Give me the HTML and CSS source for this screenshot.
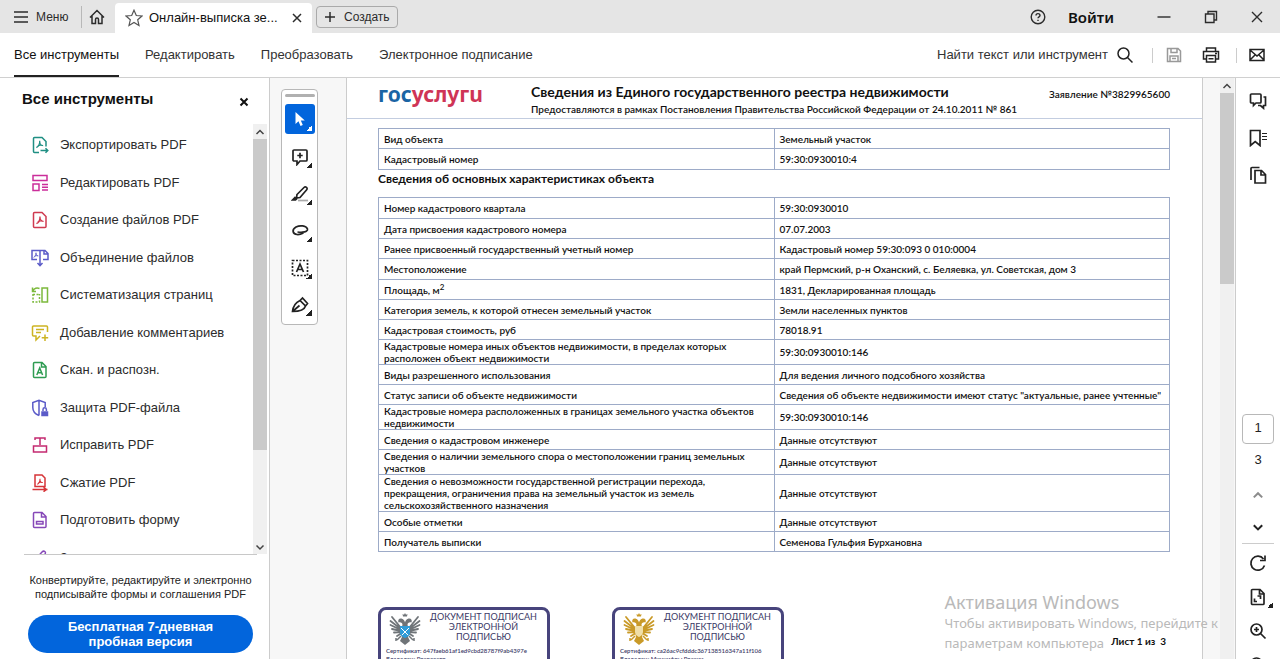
FILE: index.html
```html
<!DOCTYPE html>
<html lang="ru">
<head>
<meta charset="utf-8">
<title>Онлайн-выписка</title>
<link rel="stylesheet" href="styles.css">
</head>
<body>
<svg class="defs" aria-hidden="true">
  <symbol id="chev-up" viewBox="0 0 10 10"><path d="M1.5 7 5 3.5 8.5 7"/></symbol>
  <symbol id="chev-down" viewBox="0 0 10 10"><path d="M1.5 3.5 5 7l3.5-3.5"/></symbol>
  <symbol id="acro" viewBox="0 0 10 10"><path d="M1 9C3.500 8 5 5 5 1M5 2c0 2.500 2 4.500 4 4.500M2.500 7C4 6 6 5.800 8 6.300" /></symbol>
  <symbol id="eagle" viewBox="0 0 32 34">
    <path class="plume" d="M12 16 3 5M12 17 1.500 9M12 18 1.500 13M12 19 3 17M12 20 5 20.500M13 21 8 24M20 16l9-11M20 17l10.500-8M20 18l10.500-5M20 19l9-2M20 20l7 .5M19 21l5 3"/>
    <path class="body" d="M13.500 13c0-2-1.500-3-4-2.500C8.500 8 10 6 12.500 6.500 15 7 15.500 9 16 10.500c.5-1.500 1-3.500 3.500-4 2.500-.5 4 1.500 3 4-2.500-.5-4 .5-4 2.500l2 5-1.500 7 2 4-5 4-5-4 2-4-1.500-7z"/>
    <path class="body" d="M14 4.500 13.500 2l1.500.8L16 1l1 1.800 1.500-.8-.5 2.500z"/>
    <path class="legs" d="M12 24l-4 4M20 24l4 4M7 26v3M25 26v3"/>
  </symbol>
</svg>

<header class="titlebar">
  <button class="menu-btn"><svg class="ico16" viewBox="0 0 16 16"><path d="M1 3h14M1 8h14M1 13h14"/></svg>Меню</button>
  <button class="home-btn" aria-label="Главная"><svg class="ico16" viewBox="0 0 16 16"><path d="M1 8.500 8 1.500l7 7M3 7v7.500h3.500V10.500a1.500 1.500 0 0 1 3 0V14.500H13V7"/></svg></button>
  <div class="tab">
    <svg class="ico18 star" viewBox="0 0 18 18"><path d="m9 1.200 2.300 5.300 5.700.5-4.300 3.800 1.300 5.700L9 13.500l-5 3 1.300-5.700L1 7l5.700-.5z"/></svg>
    <span class="tab-name">Онлайн-выписка зе...</span>
    <button class="tab-close" aria-label="Закрыть вкладку"><svg class="ico12" viewBox="0 0 12 12"><path d="m2 2 8 8M10 2l-8 8"/></svg></button>
  </div>
  <button class="create-btn"><svg class="ico12" viewBox="0 0 12 12"><path d="M6 1v10M1 6h10"/></svg>Создать</button>
  <div class="window-side">
    <button aria-label="Справка"><svg class="ico16" viewBox="0 0 16 16"><circle cx="8" cy="8" r="6.800"/><path d="M6 6.500c0-2.500 4-2.500 4 0C10 8 8 7.700 8 9.300M8 10.700v1.300"/></svg></button>
    <button class="login">Войти</button>
    <button aria-label="Свернуть"><svg class="ico16" viewBox="0 0 16 16"><path d="M1.500 8h13"/></svg></button>
    <button aria-label="Восстановить"><svg class="ico14" viewBox="0 0 14 14"><path d="M1.500 4h8.500v8.500H1.500zM4 4V1.500h8.500V10H10"/></svg></button>
    <button aria-label="Закрыть"><svg class="ico14" viewBox="0 0 14 14"><path d="m2 2 10 10M12 2 2 12"/></svg></button>
  </div>
</header>

<nav class="toolbar">
  <a class="active" href="#all">Все инструменты</a>
  <a href="#edit">Редактировать</a>
  <a href="#convert">Преобразовать</a>
  <a href="#sign">Электронное подписание</a>
  <button class="search">Найти текст или инструмент<svg class="ico18" viewBox="0 0 18 18"><circle cx="7.500" cy="7.500" r="5.500"/><path d="m11.500 11.500 5 5"/></svg></button>
  <div class="quick">
    <button class="faded" aria-label="Сохранить"><svg class="ico16" viewBox="0 0 16 16"><path d="M1.500 1.500h10.500l2.500 2.500v10.500h-13zM5 1.500v4h6v-4M4 14.500V9h8v5.500M6 11.500h4"/></svg></button>
    <button aria-label="Печать"><svg class="ico18" viewBox="0 0 18 18"><path d="M4.500 5.500V2h9v3.500M4.500 13H1.500V5.500h15V13h-3M4.500 9.500h9V16h-9zM6.500 12.800h5M13 7.500h2"/></svg></button>
  </div>
  <button class="mail" aria-label="Отправить"><svg class="ico16" viewBox="0 0 16 16"><path d="M1 2.500h14v11H1zM1 3l7 6 7-6M1 13l5-5M15 13l-5-5"/></svg></button>
</nav>

<main class="workspace">
  <aside class="sidebar">
    <div class="side-head"><h2>Все инструменты</h2><button aria-label="Закрыть панель"><svg class="ico10" viewBox="0 0 10 10"><path d="m1.500 1.500 7 7M8.500 1.500l-7 7"/></svg></button></div>
    <div class="side-scroll">
      <ul class="tools">
        <li><a href="#t1"><svg class="ico18 c-teal" viewBox="0 0 18 18"><path d="M8 16.500H3.500a1 1 0 0 1-1-1v-13a1 1 0 0 1 1-1H11l4 4v5M9.500 14.500h7M14.500 12.200l2.300 2.300-2.300 2.300"/><use href="#acro" x="4.500" y="4" width="8.500" height="8.500"/></svg>Экспортировать PDF</a></li>
        <li><a href="#t2"><svg class="ico18 c-pink" viewBox="0 0 18 18"><path d="M2 1.500h14v5H2zM2 10h6v6.500H2zM11 10.500h6M11 13.300h6M11 16h6"/></svg>Редактировать PDF</a></li>
        <li><a href="#t3"><svg class="ico18 c-red" viewBox="0 0 18 18"><path d="M3.500 1.500H11l4 4v10a1 1 0 0 1-1 1H3.500a1 1 0 0 1-1-1v-13a1 1 0 0 1 1-1z"/><use href="#acro" x="4.500" y="4.500" width="9" height="9"/></svg>Создание файлов PDF</a></li>
        <li><a href="#t4"><svg class="ico18 c-indigo" viewBox="0 0 18 18"><path d="M6 10.500H1V1.500h8v9M12 10.500h5V4.500l-3-3H9M13 1.500V5h4M9 9v7.500M6.500 14 9 16.700 11.500 14"/><use href="#acro" x="2" y="3" width="6" height="6"/></svg>Объединение файлов</a></li>
        <li><a href="#t5"><svg class="ico18 c-lime" viewBox="0 0 18 18"><path d="M11 2h5.500v14H11z"/><path d="M2 5c1-3 4-3.500 6.500-2.500M1.500 1.500V5.500H5"/><path stroke-dasharray="2 1.500" d="M2 8.500h6.500M2 8v8h6.500V8"/></svg>Систематизация страниц</a></li>
        <li><a href="#t6"><svg class="ico18 c-gold" viewBox="0 0 18 18"><path d="M16.500 8V3a1 1 0 0 0-1-1h-13a1 1 0 0 0-1 1v8a1 1 0 0 0 1 1H5v4l4-4M5 5.500h8M5 8.500h5M14 10.500v6.500M10.700 13.700h6.500"/></svg>Добавление комментариев</a></li>
        <li><a href="#t7"><svg class="ico18 c-green" viewBox="0 0 18 18"><path d="M3.500 1.500H11l4 4v10a1 1 0 0 1-1 1H3.500a1 1 0 0 1-1-1v-13a1 1 0 0 1 1-1zM10.500 1.500V6H15M5.800 14 8.700 7l2.900 7M6.800 11.800h3.800"/></svg>Скан. и распозн.</a></li>
        <li><a href="#t8"><svg class="ico18 c-indigo" viewBox="0 0 18 18"><path d="M8 16.500C4 15 1.800 12 1.800 8.500V3.500L8 1.200l6.200 2.300V8M8 1.500v15"/><path class="solid" d="M11 13h5.500v3.500H11z"/><path d="M12 12v-1.500a1.700 1.700 0 0 1 3.400 0V12"/></svg>Защита PDF-файла</a></li>
        <li><a href="#t9"><svg class="ico18 c-crimson" viewBox="0 0 18 18"><path d="M4 4V2h10v2M9 2v7M2.500 10h13v6h-13z"/></svg>Исправить PDF</a></li>
        <li><a href="#t10"><svg class="ico18 c-red2" viewBox="0 0 18 18"><path d="M5 1h6l3 3v8.500H4V1zM1.500 15.500h15M12.500 13.300l3 2.200-3 2.200"/><use href="#acro" x="5.500" y="4" width="7" height="7"/></svg>Сжатие PDF</a></li>
        <li><a href="#t11"><svg class="ico18 c-purple" viewBox="0 0 18 18"><path d="M3.500 1.500H11l4 4v10a1 1 0 0 1-1 1H3.500a1 1 0 0 1-1-1v-13a1 1 0 0 1 1-1zM10.500 1.500V6H15M5.500 10.500h6.500V13H5.500z"/></svg>Подготовить форму</a></li>
        <li><a href="#t12"><svg class="ico18 c-purple" viewBox="0 0 18 18"><path d="M3 12 11 3c2-2 4.500 0 3 2L7 13l-4 2z"/></svg>Заполнить и подписать</a></li>
      </ul>
      <div class="scrollbar side-bar"><button aria-label="Вверх"><svg class="ico10"><use href="#chev-up"/></svg></button><span class="thumb"></span><button aria-label="Вниз"><svg class="ico10"><use href="#chev-down"/></svg></button></div>
    </div>
    <div class="promo">
      <p>Конвертируйте, редактируйте и электронно подписывайте формы и соглашения PDF</p>
      <button>Бесплатная 7-дневная пробная версия</button>
    </div>
  </aside>

  <div class="strip">
    <div class="palette">
      <span class="grip"></span>
      <button class="on" aria-label="Выбор"><svg class="ico18" viewBox="0 0 18 18"><path class="pointer" d="M4.500 2v12l3-2.700 2 4.700 2.300-1-2-4.500h4z"/></svg></button>
      <button aria-label="Комментарий"><svg class="ico18" viewBox="0 0 18 18"><path d="M3 2h12a1 1 0 0 1 1 1v9a1 1 0 0 1-1 1H9l-3 3.500V13H3a1 1 0 0 1-1-1V3a1 1 0 0 1 1-1zM9 4.800v5.400M6.300 7.500h5.400"/></svg></button>
      <button aria-label="Выделение"><svg class="ico18" viewBox="0 0 18 18"><path class="soft" d="M7 15.500h10"/><path d="m6 9.500 7-7c1.500-1.500 4.200.5 2.700 2.200L9 12.500l-3.500.500z"/><path class="solid" d="m1.500 15 2.500-2.500 1.500 1.500-1 1h-3z"/></svg></button>
      <button aria-label="Рисование"><svg class="ico18" viewBox="0 0 18 18"><path d="M16.500 7C15 3.500 9 3 5 5 .5 7.500 1.500 12 6 12.500c3 .3 4.500-.5 6.500-1.500M16.500 7c.5 2-2 3-5 3.200-2 .1-3.500 0-5-.2"/></svg></button>
      <button aria-label="Текст"><svg class="ico18" viewBox="0 0 18 18"><path stroke-dasharray="2 1.500" d="M1.500 1.500h15v15h-15z"/><path d="M5.500 13 9 5l3.500 8M6.800 10.500h4.400"/></svg></button>
      <button aria-label="Подпись"><svg class="ico18" viewBox="0 0 18 18"><path d="M1.500 15.500C2 11 3.500 7 9 4.500l5.500 5.500c-1 3.500-5 5.500-13 5.500zM9 4.500l2.500-2.500 5 5.500-2 2.500M1.500 15.500l7-6"/></svg></button>
    </div>
  </div>

  <section class="viewer">
    <article class="page">
      <header class="doc-head">
        <div class="logo"><span>гос</span>услугu</div>
        <div class="doc-title"><h1>Сведения из Единого государственного реестра недвижимости</h1><p>Предоставляются в рамках Постановления Правительства Российской Федерации от 24.10.2011 № 861</p></div>
        <p class="request">Заявление №3829965600</p>
      </header>
      <div class="doc-body">
        <table>
          <tr><th scope="row">Вид объекта</th><td>Земельный участок</td></tr>
          <tr class="roomy"><th scope="row">Кадастровый номер</th><td>59:30:0930010:4</td></tr>
        </table>
        <h2>Сведения об основных характеристиках объекта</h2>
        <table>
          <tr class="roomy"><th scope="row">Номер кадастрового квартала</th><td>59:30:0930010</td></tr>
          <tr><th scope="row">Дата присвоения кадастрового номера</th><td>07.07.2003</td></tr>
          <tr><th scope="row">Ранее присвоенный государственный учетный номер</th><td>Кадастровый номер 59:30:093 0 010:0004</td></tr>
          <tr class="roomy"><th scope="row">Местоположение</th><td>край Пермский, р-н Оханский, с. Беляевка, ул. Советская, дом 3</td></tr>
          <tr><th scope="row">Площадь, м<sup>2</sup></th><td>1831, Декларированная площадь</td></tr>
          <tr><th scope="row">Категория земель, к которой отнесен земельный участок</th><td>Земли населенных пунктов</td></tr>
          <tr><th scope="row">Кадастровая стоимость, руб</th><td>78018.91</td></tr>
          <tr><th scope="row">Кадастровые номера иных объектов недвижимости, в пределах которых<br>расположен объект недвижимости</th><td>59:30:0930010:146</td></tr>
          <tr><th scope="row">Виды разрешенного использования</th><td>Для ведения личного подсобного хозяйства</td></tr>
          <tr><th scope="row">Статус записи об объекте недвижимости</th><td>Сведения об объекте недвижимости имеют статус "актуальные, ранее учтенные"</td></tr>
          <tr><th scope="row">Кадастровые номера расположенных в границах земельного участка объектов<br>недвижимости</th><td>59:30:0930010:146</td></tr>
          <tr><th scope="row">Сведения о кадастровом инженере</th><td>Данные отсутствуют</td></tr>
          <tr><th scope="row">Сведения о наличии земельного спора о местоположении границ земельных<br>участков</th><td>Данные отсутствуют</td></tr>
          <tr><th scope="row">Сведения о невозможности государственной регистрации перехода,<br>прекращения, ограничения права на земельный участок из земель<br>сельскохозяйственного назначения</th><td>Данные отсутствуют</td></tr>
          <tr><th scope="row">Особые отметки</th><td>Данные отсутствуют</td></tr>
          <tr><th scope="row">Получатель выписки</th><td>Семенова Гульфия Бурхановна</td></tr>
        </table>
        <footer class="doc-foot">
          <div class="stamp">
            <div class="stamp-head">
              <svg class="emblem silver" viewBox="0 0 32 34"><use href="#eagle"/><path class="shield" d="M11 14h10v7c0 3-5 5-5 5s-5-2-5-5z"/><path class="cross" d="m12 16 7 7M20 16l-7 7"/></svg>
              <p>ДОКУМЕНТ ПОДПИСАН<br>ЭЛЕКТРОННОЙ<br>ПОДПИСЬЮ</p>
            </div>
            <p class="cert">Сертификат: 647faeb61af1ed9cbd28787f9ab4397e<br>Владелец: Росреестр</p>
          </div>
          <div class="stamp">
            <div class="stamp-head">
              <svg class="emblem golden" viewBox="0 0 32 34"><use href="#eagle"/><path class="shield" d="M12 14h8v6c0 3-4 5-4 5s-4-2-4-5z"/></svg>
              <p>ДОКУМЕНТ ПОДПИСАН<br>ЭЛЕКТРОННОЙ<br>ПОДПИСЬЮ</p>
            </div>
            <p class="cert">Сертификат: ca26ac9cfdddc367138516347a11f106<br>Владелец: Минцифры России</p>
          </div>
          <p class="sheet">Лист 1 из&nbsp; 3</p>
        </footer>
      </div>
    </article>
    <div class="scrollbar"><button aria-label="Вверх"><svg class="ico10"><use href="#chev-up"/></svg></button><span class="thumb page-thumb"></span></div>
    <div class="activation"><strong>Активация Windows</strong>Чтобы активировать Windows, перейдите к<br>параметрам компьютера</div>
  </section>

  <aside class="rail">
    <button aria-label="Комментарии"><svg class="ico18" viewBox="0 0 18 18"><path d="M2.500 2h8.500a1 1 0 0 1 1 1v7a1 1 0 0 1-1 1H7l-2.500 2.500V11h-2a1 1 0 0 1-1-1V3a1 1 0 0 1 1-1zM14.500 5h2v8.500h-2v2.700L11.500 13.500H9"/></svg></button>
    <button aria-label="Закладки"><svg class="ico18" viewBox="0 0 18 18"><path d="M1.500 1.500h9.500v15L6.200 12.500l-4.700 4z"/><path class="thin" d="M13 4.500h5M13 7.500h5M13 10.500h5"/></svg></button>
    <button aria-label="Страницы"><svg class="ico18" viewBox="0 0 18 18"><path d="M6 4.500h6.500l4 4V17H6zM12 4.500V9h4.500M2 14V2.500a1 1 0 0 1 1-1h7.500"/></svg></button>
    <div class="pager">
      <input type="text" value="1" aria-label="Номер страницы">
      <span>3</span>
      <button class="faded" aria-label="Предыдущая"><svg class="ico12"><use href="#chev-up"/></svg></button>
      <button aria-label="Следующая"><svg class="ico12"><use href="#chev-down"/></svg></button>
    </div>
    <div class="view-tools">
      <button aria-label="Повернуть"><svg class="ico18" viewBox="0 0 18 18"><path d="M15.500 11.500A7 7 0 1 1 14.500 5M16 1.500V6.500H11"/></svg></button>
      <button class="more" aria-label="Масштаб страницы"><svg class="ico18" viewBox="0 0 18 18"><path d="M3.500 1.500H11l4 4v10a1 1 0 0 1-1 1H3.500a1 1 0 0 1-1-1v-13a1 1 0 0 1 1-1zM10.500 1.500V6H15M5.500 10.500V13.500H8M8.500 8h3v3"/></svg></button>
      <button aria-label="Увеличить"><svg class="ico18" viewBox="0 0 18 18"><circle cx="7.500" cy="7.500" r="5.500"/><path d="m11.500 11.500 5 5M7.500 5v5M5 7.500h5"/></svg></button>
      <button aria-label="Уменьшить"><svg class="ico18" viewBox="0 0 18 18"><circle cx="7.500" cy="7.500" r="5.500"/><path d="m11.500 11.500 5 5M5 7.500h5"/></svg></button>
    </div>
  </aside>
</main>
</body>
</html>
```
FILE: styles.css
```css
* { box-sizing: border-box; }
html, body { height: 100%; }
body {
  margin: 0;
  display: flex;
  flex-direction: column;
  overflow: hidden;
  font: 13px/20px "Liberation Sans", Arial, sans-serif;
  color: #2c2c2c;
  background: #fff;
}
p, h1, h2, ul { margin: 0; padding: 0; }
ul { list-style: none; }
a { color: inherit; text-decoration: none; }
button { border: 0; padding: 0; background: none; font: inherit; color: inherit; display: flex; align-items: center; justify-content: center; }
svg { fill: none; stroke: currentColor; stroke-width: 1.5; flex: none; display: block; }
.solid { fill: currentColor; }
.pointer { fill: currentColor; stroke: none; }
.soft { stroke: #aaa; }
.thin { stroke-width: 1; }
.faded { color: #8c8c8c; }
.defs { position: absolute; width: 0; height: 0; }
.ico10 { width: 10px; height: 10px; }
.ico12 { width: 12px; height: 12px; }
.ico14 { width: 14px; height: 14px; }
.ico16 { width: 16px; height: 16px; }
.ico18 { width: 18px; height: 18px; }

.titlebar { flex: none; height: 33px; display: flex; align-items: center; background: #e5e5e5; padding-right: 16px; }
.menu-btn { gap: 7px; padding-left: 13px; width: 82px; height: 22px; justify-content: flex-start; font-size: 12px; border-right: 1px solid #b8b8b8; }
.home-btn { width: 29px; }
.tab { align-self: flex-end; display: flex; align-items: center; height: 30px; width: 197px; margin-left: 4px; padding: 0 9px 0 10px; background: #fff; border-radius: 4px 4px 0 0; }
.star { color: #555; stroke-width: 1.2; }
.tab-name { margin-left: 6px; flex: 1; white-space: nowrap; color: #111; }
.create-btn { height: 22px; margin-left: 4px; padding: 0 7px; gap: 8px; border: 1px solid #aaa; border-radius: 4px; font-size: 12px; }
.window-side { margin-left: auto; display: flex; align-items: center; gap: 32px; }
.window-side .login { margin-left: -10px; margin-right: 10px; font: 600 15px/20px "Noto Sans", sans-serif; color: #111; }
.window-side svg { stroke-width: 1.4; }

.toolbar { flex: none; height: 45px; display: flex; align-items: center; padding: 0 15px 0 14px; border-bottom: 1px solid #d0d0d0; gap: 26px; color: #333; }
.toolbar a { height: 44px; line-height: 44px; border-bottom: 2px solid transparent; }
.toolbar a.active { border-color: #222; color: #111; }
.search { margin-left: auto; gap: 8px; }
.quick { display: flex; align-items: center; height: 15px; gap: 20px; padding: 0 16px 0 13px; margin-left: -8px; border: solid #ccc; border-width: 0 1px; }
.mail { margin-left: -14px; }
.search svg, .quick svg, .mail svg { color: #222; }
.quick .faded svg { color: #999; }

.workspace { flex: 1; min-height: 0; display: flex; }
.sidebar { flex: none; width: 270px; display: flex; flex-direction: column; border-right: 1px solid #ccc; }
.side-head { flex: none; height: 46px; padding: 0 20px 4px 22px; display: flex; align-items: center; justify-content: space-between; color: #111; }
.side-head h2 { font-size: 15px; line-height: 20px; }
.side-head button { padding-top: 6px; }
.side-head svg { stroke-width: 2; }
.side-scroll { flex: 1; min-height: 0; display: flex; justify-content: space-between; padding-right: 2px; }
.tools { overflow: hidden; padding-top: 2px; }
.tools li { padding: 9px 0; }
.tools li:nth-child(even) { padding-bottom: 8px; }
.tools a { display: flex; align-items: center; gap: 11px; padding-left: 31px; white-space: nowrap; }
.c-teal { color: #1f8f83; } .c-pink { color: #cb2e9a; } .c-red { color: #cf3a50; } .c-indigo { color: #5b5bc8; }
.c-lime { color: #7cb93c; } .c-gold { color: #cdb422; } .c-green { color: #2f9c52; } .c-crimson { color: #c42a70; }
.c-red2 { color: #d63438; } .c-purple { color: #8648b8; }
.scrollbar { flex: none; width: 14px; display: flex; flex-direction: column; background: #f0f0f0; color: #444; }
.scrollbar button { height: 15px; }
.side-bar .thumb { height: 311px; margin-bottom: auto; }
.thumb { background: #cacaca; }
.promo { flex: none; margin: 0 12px 0 24px; padding: 18px 0 6px; border-top: 1px solid #c8c8c8; text-align: center; color: #222; }
.promo p { font-size: 11px; line-height: 14px; margin: 0 0 14px; }
.promo button { width: 225px; min-height: 38px; margin-left: 4px; padding: 0 30px; border-radius: 19px; background: #0265dc; color: #fff; font-weight: bold; font-size: 13px; line-height: 15px; }

.strip { flex: none; width: 76px; background: #f7f7f7; padding: 11px 28px 0 11px; }
.palette { display: flex; flex-direction: column; align-items: center; gap: 8px; height: 236px; border: 1px solid #b8b8b8; border-radius: 4px; background: #fff; padding-top: 4px; color: #222; }
.palette svg, .rail svg { stroke-width: 1.7; }
.grip { flex: none; width: 30px; height: 3px; margin-bottom: -1px; border-radius: 2px; background: #b0b0b0; }
.palette button { position: relative; width: 30px; height: 30px; flex: none; }
.palette button + button { height: 29px; }
.palette button::after, .more::after { content: ""; position: absolute; right: 3px; bottom: 3px; width: 6px; height: 6px; background: linear-gradient(135deg, transparent 50%, currentColor 50%); }
.palette .on { background: #0265dc; color: #fff; border-radius: 3px; }

.viewer { position: relative; flex: 1; min-width: 0; display: flex; justify-content: space-between; background: #f7f7f7; border-right: 1px solid #ccc; padding-right: 1px; overflow: hidden; }
.page { flex: 1; margin-right: 17px; border: solid #ccc; border-width: 0 1px; background: #fff; font-family: Lato, Carlito, sans-serif; font-size: 10px; line-height: 12px; font-weight: 600; color: #111; overflow: hidden; }
.doc-head { display: flex; height: 41px; padding: 4px 32px 0 31px; border-bottom: 1px solid #c3cde0; }
.logo { flex: none; width: 153px; font: bold 21px/24px "Noto Sans", sans-serif; color: #cf3456; }
.logo span { color: #1a64a4; }
.doc-title { flex: 1; white-space: nowrap; }
.doc-title h1 { font-size: 14px; line-height: 19px; font-weight: 700; }
.doc-title p { line-height: 16px; }
.request { padding-top: 6px; white-space: nowrap; }
.doc-body { padding: 9px 32px 0 31px; }
table { width: 100%; table-layout: fixed; border-collapse: collapse; }
th, td { border: 1px solid #9dabc8; padding: 0 0 0 5px; height: 20px; font-weight: inherit; text-align: left; vertical-align: middle; white-space: nowrap; }
.roomy th, .roomy td { height: 21px; }
sup { font-size: 8px; line-height: 0; }
.doc-body h2 { font-size: 12px; line-height: 18px; padding-bottom: 9px; }
.doc-foot { display: flex; align-items: flex-start; gap: 62px; padding-top: 55px; }
.stamp { flex: none; width: 172px; height: 72px; border: 3px solid #47447c; border-radius: 8px; padding: 2px 5px; color: #3b3a66; }
.stamp-head { display: flex; gap: 4px; }
.stamp-head p { flex: 1; font-size: 9px; line-height: 10px; font-weight: 400; text-align: center; white-space: nowrap; }
.emblem { width: 32px; height: 34px; margin-left: 3px; stroke-width: 1; }
.silver { color: #6f7478; }
.golden { color: #c99a28; }
.plume { stroke-width: 1.8; stroke-linecap: round; }
.body { fill: currentColor; stroke: none; }
.legs { stroke-width: 1.5; }
.shield { stroke: none; }
.silver .shield { fill: #2e9bd8; }
.golden .shield { fill: #f0dfa8; }
.cross { stroke: #fff; }
.cert { font-size: 6px; line-height: 8px; padding-top: 1px; white-space: nowrap; }
.sheet { margin-left: auto; padding: 28px 4px 0 0; font-weight: 700; white-space: nowrap; }
.activation { position: absolute; right: 17px; bottom: 6px; font: 13px/20px "Noto Sans", sans-serif; color: #b9b9b9; white-space: nowrap; }
.activation strong { display: block; font-size: 18px; line-height: 22px; font-weight: 400; }
.page-thumb { height: 191px; }

.rail { flex: none; width: 44px; display: flex; flex-direction: column; align-items: center; color: #222; overflow: hidden; padding-top: 14px; }
.rail > button { height: 18px; margin-bottom: 19px; }
.pager { margin-top: auto; display: flex; flex-direction: column; align-items: center; width: 32px; padding-bottom: 10px; border-bottom: 1px solid #ccc; }
.pager input { width: 32px; height: 30px; border: 1px solid #b8b8b8; border-radius: 4px; text-align: center; font: inherit; padding: 0 0 4px; color: inherit; }
.pager span { margin-top: 6px; }
.pager button { height: 12px; margin-top: 20px; }
.pager button.faded { margin-top: 19px; }
.view-tools { display: flex; flex-direction: column; gap: 16px; padding-top: 10px; height: 115px; }
.view-tools button { position: relative; flex: none; }
.more::after { right: -6px; bottom: -2px; }
```
